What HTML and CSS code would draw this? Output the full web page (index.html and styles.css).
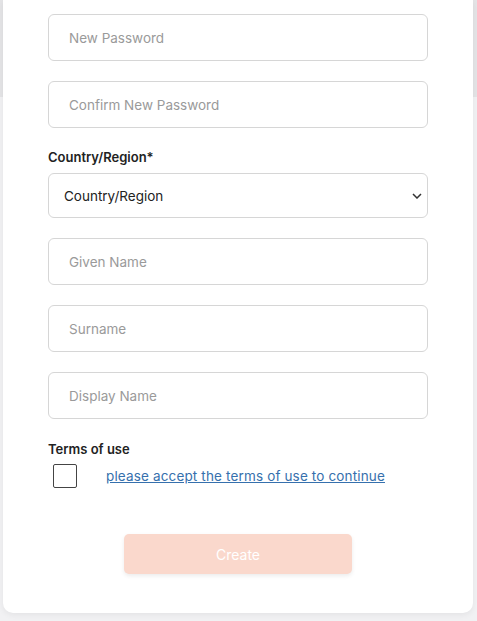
FILE: index.html
```html
<!DOCTYPE html>
<html lang="en">
<head>
    <meta charset="UTF-8">
    <title>Create Account</title>
    <link rel="stylesheet" href="styles.css">
</head>
<body>
    <div class="card">
        <form class="signup-form">
            <input class="field" type="password" placeholder="New Password">
            <input class="field" type="password" placeholder="Confirm New Password">

            <div class="group">
                <label class="label">Country/Region*</label>
                <div class="select-wrap">
                    <select class="select">
                        <option>Country/Region</option>
                    </select>
                    <svg class="chevron" width="10" height="6" viewBox="0 0 10 6"><path d="M1 1l4 4 4-4" fill="none" stroke="#333" stroke-width="1.5"/></svg>
                </div>
            </div>

            <input class="field" type="text" placeholder="Given Name">
            <input class="field" type="text" placeholder="Surname">
            <input class="field" type="text" placeholder="Display Name">

            <!-- Terms -->
            <div class="terms">
                <span class="label">Terms of use</span>
                <div class="terms-row">
                    <span class="checkbox"></span>
                    <a href="#" class="terms-link">please accept the terms of use to continue</a>
                </div>
            </div>

            <div class="actions">
                <button type="button" class="btn" disabled>Create</button>
            </div>
        </form>
    </div>
</body>
</html>
```

FILE: styles.css
```css
/* Basic styling */
body {
    margin: 0;
    height: 621px;
    font-family: 'Inter', 'Liberation Sans', sans-serif;
    background: linear-gradient(#e4e4e6 0, #e4e4e6 97px, #f1f1f3 97px);
}

.card {
    margin: 0 4px 0 3px;
    height: 613px;
    background: white;
    border-radius: 0 0 10px 10px;
    box-shadow: 0 2px 6px rgba(0,0,0,0.06);
    box-sizing: border-box;
    padding: 14px 42px 0 45px;
}

.signup-form {
    display: flex;
    flex-direction: column;
    gap: 20px;
    width: 380px;
}

.field {
    box-sizing: border-box;
    height: 47px;
    width: 100%;
    border: 1px solid #d6d6d6;
    border-radius: 6px;
    padding: 0 20px;
    font-family: inherit;
    font-size: 13.5px;
    color: #222;
    outline: none;
}

.field::placeholder {
    color: #9a9a9a;
}

.group {
    display: flex;
    flex-direction: column;
    gap: 8px;
    margin-top: 1px;
}

.label {
    font-size: 13px;
    font-weight: 600;
    color: #222;
}

.select-wrap {
    position: relative;
}

.select {
    box-sizing: border-box;
    width: 100%;
    height: 45px;
    appearance: none;
    background: white;
    border: 1px solid #d6d6d6;
    border-radius: 6px;
    padding: 0 15px;
    font-family: inherit;
    font-size: 13.5px;
    color: #222;
}

.chevron {
    position: absolute;
    right: 6px;
    top: 20px;
}

.terms {
    display: flex;
    flex-direction: column;
    gap: 7px;
    margin-top: 2px;
}

.terms-row {
    display: flex;
    align-items: center;
    gap: 29px;
    padding-left: 5px;
}

.checkbox {
    width: 22px;
    height: 22px;
    border: 1px solid #444;
    border-radius: 2px;
}

.terms-link {
    font-size: 13.5px;
    letter-spacing: 0.15px;
    color: #3670ad;
    text-decoration: underline;
}

.actions {
    display: flex;
    justify-content: center;
    margin-top: 26px;
}

.btn {
    width: 228px;
    height: 40px;
    background: #fad8cc;
    color: white;
    font-family: inherit;
    font-size: 14px;
    border: none;
    border-radius: 5px;
    box-shadow: 0 2px 4px rgba(0,0,0,0.08);
}
```
